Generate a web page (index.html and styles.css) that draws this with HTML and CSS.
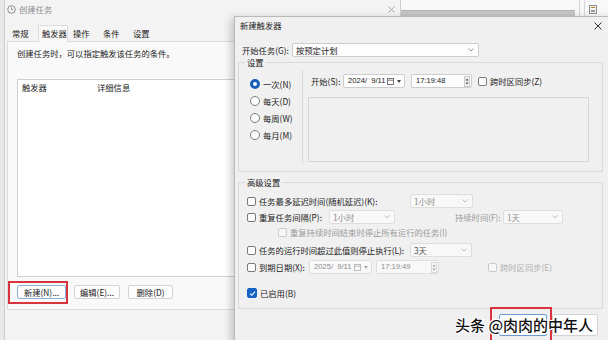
FILE: index.html
```html
<!DOCTYPE html>
<html lang="zh-CN">
<head>
    <meta charset="utf-8">
    <title>新建触发器</title>
    <link rel="stylesheet" href="styles.css">
</head>
<body>
<div class="desktop">

    <!-- window far behind, top right -->
    <div class="win-back">
        <div class="back-pane"><div class="back-bar"></div></div>
        <div class="back-tool">
            <svg width="8" height="9" viewBox="0 0 8 9"><rect x="0.5" y="0.5" width="7" height="8" fill="#f4f4f4" stroke="#8c8c8c"/><rect x="2" y="5" width="4" height="2" fill="#9a9a9a"/><rect x="2" y="2" width="4" height="1" fill="#c07a2a"/></svg>
        </div>
    </div>

    <!-- 创建任务 -->
    <div class="win-main">
        <div class="titlebar">
            <svg class="clock" width="9" height="9" viewBox="0 0 9 9"><circle cx="4.5" cy="4.5" r="3.8" fill="none" stroke="#8a8a8a" stroke-width="1"/><path d="M4.5 2.3V4.6H6.2" fill="none" stroke="#8a8a8a" stroke-width="0.9"/></svg>
            <span class="title-text">创建任务</span>
            <svg class="close" width="7" height="7" viewBox="0 0 7 7"><path d="M0.5 0.5L6.5 6.5M6.5 0.5L0.5 6.5" stroke="#9a9a9a" stroke-width="0.9"/></svg>
        </div>
        <div class="tabs">
            <div class="tab first">常规</div>
            <div class="tab on">触发器</div>
            <div class="tab">操作</div>
            <div class="tab">条件</div>
            <div class="tab">设置</div>
        </div>
        <div class="panel">
            <p class="desc">创建任务时，可以指定触发该任务的条件。</p>
            <div class="list">
                <div class="list-head"><span class="col-trigger">触发器</span><span>详细信息</span></div>
            </div>
            <div class="btn-row">
                <button class="btn focus w49">新建(N)...</button>
                <button class="btn w46">编辑(E)...</button>
                <button class="btn w45">删除(D)</button>
            </div>
        </div>
    </div>
    <div class="mark mark-new"></div>

    <!-- 新建触发器 -->
    <div class="dialog">
        <div class="dlg-title">
            <span>新建触发器</span>
            <svg class="dlg-close" width="8" height="8" viewBox="0 0 8 8"><path d="M0.5 0.5L7.5 7.5M7.5 0.5L0.5 7.5" stroke="#333" stroke-width="1"/></svg>
        </div>

        <div class="start-row">
            <span class="l50">开始任务(G):</span>
            <div class="field w187">按预定计划
                <svg class="chev" width="6" height="4" viewBox="0 0 6 4"><path d="M0.5 0.5L3 3L5.5 0.5" fill="none" stroke="#888" stroke-width="0.9"/></svg>
            </div>
        </div>

        <fieldset class="group g-set">
            <legend>设置</legend>
            <div class="set-body">
                <div class="radios">
                    <div class="radio-row"><span class="radio on"></span>一次(N)</div>
                    <div class="radio-row"><span class="radio"></span>每天(D)</div>
                    <div class="radio-row"><span class="radio"></span>每周(W)</div>
                    <div class="radio-row"><span class="radio"></span>每月(M)</div>
                </div>
                <div class="sched">
                    <div class="sched-row">
                        <span class="l32">开始(S):</span>
                        <div class="field num w62 mr6">2024/&nbsp; 9/11
                            <svg class="cal" width="7" height="8" viewBox="0 0 7 8"><rect x="0.5" y="1.5" width="6" height="6" fill="#fff" stroke="#777"/><path d="M0.5 3.2H6.5" stroke="#777"/></svg>
                            <svg class="tri" width="4" height="3" viewBox="0 0 4 3"><path d="M0 0H4L2 3Z" fill="#444"/></svg>
                        </div>
                        <div class="field num w61 mr6">17:19:48
                            <svg class="spin" width="6" height="11" viewBox="0 0 6 11"><rect x="0.5" y="0.5" width="5" height="10" fill="#f2f2f2" stroke="#c9c9c9"/><path d="M1.5 4.5H4.5L3 2.5Z M1.5 6.5H4.5L3 8.5Z" fill="#444"/></svg>
                        </div>
                        <span class="cb"></span>跨时区同步(Z)
                    </div>
                    <div class="detail-box"></div>
                </div>
            </div>
        </fieldset>

        <fieldset class="group g-adv">
            <legend>高级设置</legend>
            <div class="adv-body">
                <div class="adv-row">
                    <span class="cb"></span>
                    <span class="l151">任务最多延迟时间(随机延迟)(K):</span>
                    <div class="field dis w63">1小时
                        <svg class="chev" width="6" height="4" viewBox="0 0 6 4"><path d="M0.5 0.5L3 3L5.5 0.5" fill="none" stroke="#b5b5b5" stroke-width="0.9"/></svg>
                    </div>
                </div>
                <div class="adv-row">
                    <span class="cb"></span>
                    <span class="l70">重复任务间隔(P):</span>
                    <div class="field dis w66">1小时
                        <svg class="chev" width="6" height="4" viewBox="0 0 6 4"><path d="M0.5 0.5L3 3L5.5 0.5" fill="none" stroke="#b5b5b5" stroke-width="0.9"/></svg>
                    </div>
                    <span class="l48 grey ml60">持续时间(F):</span>
                    <div class="field dis w60">1天
                        <svg class="chev" width="6" height="4" viewBox="0 0 6 4"><path d="M0.5 0.5L3 3L5.5 0.5" fill="none" stroke="#b5b5b5" stroke-width="0.9"/></svg>
                    </div>
                </div>
                <div class="adv-row sub">
                    <span class="cb off"></span>
                    <span class="grey">重复持续时间结束时停止所有运行的任务(I)</span>
                </div>
                <div class="adv-row r4">
                    <span class="cb"></span>
                    <span class="l151">任务的运行时间超过此值则停止执行(L):</span>
                    <div class="field dis w62 dark">3天
                        <svg class="chev" width="6" height="4" viewBox="0 0 6 4"><path d="M0.5 0.5L3 3L5.5 0.5" fill="none" stroke="#b5b5b5" stroke-width="0.9"/></svg>
                    </div>
                </div>
                <div class="adv-row r5">
                    <span class="cb"></span>
                    <span class="l50">到期日期(X):</span>
                    <div class="field num dis w63 mr4">2025/&nbsp; 9/11
                        <svg class="cal" width="7" height="8" viewBox="0 0 7 8"><rect x="0.5" y="1.5" width="6" height="6" fill="#fafafa" stroke="#bbb"/><path d="M0.5 3.2H6.5" stroke="#bbb"/></svg>
                        <svg class="tri" width="4" height="3" viewBox="0 0 4 3"><path d="M0 0H4L2 3Z" fill="#aaa"/></svg>
                    </div>
                    <div class="field num dis w63">17:19:49
                        <svg class="spin" width="6" height="11" viewBox="0 0 6 11"><rect x="0.5" y="0.5" width="5" height="10" fill="#f6f6f6" stroke="#d8d8d8"/><path d="M1.5 4.5H4.5L3 2.5Z M1.5 6.5H4.5L3 8.5Z" fill="#999"/></svg>
                    </div>
                    <span class="cb off ml49"></span>
                    <span class="grey light">跨时区同步(E)</span>
                </div>
                <div class="adv-row r6">
                    <span class="cb on">
                        <svg width="7" height="7" viewBox="0 0 7 7"><path d="M1 3.6L2.8 5.3L6 1.6" fill="none" stroke="#fff" stroke-width="1.1"/></svg>
                    </span>
                    <span>已启用(B)</span>
                </div>
            </div>
        </fieldset>

        <!-- OK / Cancel, labels hidden under the watermark -->
        <div class="dlg-buttons">
            <button class="btn big default w48"></button>
            <button class="btn big w46"></button>
        </div>
    </div>
    <div class="mark mark-ok"></div>

    <div class="watermark">头条 @肉肉的中年人</div>
</div>
</body>
</html>
```

FILE: styles.css
```css
* {
    box-sizing: border-box;
}
html, body {
    margin: 0;
    padding: 0;
}
body {
    width: 608px;
    height: 340px;
    overflow: hidden;
    background: #e8e8e8;
    font-family: "Noto Sans CJK SC", "Noto Sans", sans-serif;
    font-size: 8.3px;
    line-height: 12px;
    color: #1b1b1b;
}
.desktop {
    position: relative;
    width: 608px;
    height: 340px;
}

/* back window */
.win-back {
    position: absolute;
    left: 400px;
    top: 0;
    width: 208px;
    height: 30px;
    background: #f8f8f8;
    display: flex;
}
.back-pane {
    width: 180px;
    padding-top: 10px;
    border-right: 1px solid #d3d3d3;
}
.back-bar {
    width: 175px;
    height: 6px;
    background: #c6c6c6;
    border-top: 1px solid #b3b3b3;
}
.back-tool {
    margin-left: 4px;
    padding: 4px 0 0 4px;
    border-left: 1px solid #d8d8d8;
}

/* main window */
.win-main {
    position: absolute;
    left: 4px;
    top: 0;
    width: 397px;
    height: 340px;
    background: #f3f3f3;
    border-left: 1px solid #cdcdcd;
    border-right: 1px solid #cdcdcd;
}
.titlebar {
    height: 18px;
    display: flex;
    align-items: center;
    padding-left: 2px;
    color: #8c8c8c;
}
.clock {
    margin-right: 3px;
}
.titlebar .close {
    margin-left: auto;
    margin-right: 5px;
}
.tabs {
    display: flex;
    margin-top: 7px;
    padding-left: 2px;
    height: 16px;
}
.tab {
    width: 30px;
    padding-left: 5px;
    line-height: 16px;
}
.tab.first {
    width: 31px;
}
.tab.on {
    position: relative;
    z-index: 1;
    height: 17px;
    padding-left: 3px;
    line-height: 15px;
    background: #f9f9f9;
    border: 1px solid #dcdcdc;
    border-bottom: none;
    margin-bottom: -1px;
}
.panel {
    margin-left: 2px;
    width: 392px;
    height: 269px;
    background: #f9f9f9;
    border: 1px solid #dcdcdc;
    padding: 5px 0 0 9px;
}
.desc {
    margin: 0;
}
.list {
    margin-top: 20px;
    width: 381px;
    height: 198px;
    background: #fff;
    border: 1px solid #cfcfcf;
}
.list-head {
    display: flex;
    padding: 1px 4px;
}
.col-trigger {
    width: 75px;
}
.btn-row {
    display: flex;
    gap: 8px;
    margin-top: 8px;
}
.btn {
    height: 14px;
    padding: 0;
    font: inherit;
    line-height: 12px;
    color: #1b1b1b;
    background: #fdfdfd;
    border: 1px solid #d3d3d3;
    border-radius: 2px;
}
.btn.focus {
    border-color: #8db1de;
}
.w45 { width: 45px; }
.w46 { width: 46px; }
.w48 { width: 48px; }
.w49 { width: 49px; }

/* red annotation boxes */
.mark {
    position: absolute;
    border: 2px solid #d8333f;
    z-index: 5;
}
.mark-new {
    left: 8px;
    top: 281px;
    width: 60px;
    height: 23px;
}
.mark-ok {
    left: 490px;
    top: 307px;
    width: 62px;
    height: 40px;
}

/* dialog */
.dialog {
    position: absolute;
    left: 234px;
    top: 16px;
    width: 380px;
    height: 330px;
    background: #f0f0f0;
    border: 1px solid #b9b9b9;
    box-shadow: -3px 2px 8px rgba(0, 0, 0, 0.2);
}
.dlg-title {
    height: 25px;
    display: flex;
    align-items: flex-start;
    padding: 2px 0 0 5px;
}
.dlg-close {
    margin: 3px 11px 0 auto;
}
.start-row {
    display: flex;
    align-items: center;
    height: 15px;
    padding-left: 7px;
}
.l32 { width: 32px; flex: none; }
.l48 { width: 48px; flex: none; }
.l50 { width: 50px; flex: none; }
.l70 { width: 70px; flex: none; }
.l151 { width: 151px; flex: none; }
.w60 { width: 60px; }
.w61 { width: 61px; }
.w62 { width: 62px; }
.w63 { width: 63px; }
.w66 { width: 66px; }
.w187 { width: 187px; height: 15px; }
.mr4 { margin-right: 4px; }
.mr6 { margin-right: 6px; }
.ml49 { margin-left: 49px; }
.ml60 { margin-left: 60px; }

.field {
    flex: none;
    height: 14px;
    display: flex;
    align-items: center;
    padding-left: 3px;
    background: #fdfdfd;
    border: 1px solid #cdcdcd;
    border-radius: 2px;
    white-space: nowrap;
}
.field.num {
    font-family: "Liberation Sans", "Noto Sans CJK SC", sans-serif;
    font-size: 7.6px;
    padding-left: 4px;
}
.field .chev {
    margin-left: auto;
    margin-right: 4px;
}
.field .cal {
    margin-left: auto;
    margin-right: 3px;
}
.field .tri {
    margin-right: 3px;
}
.field .spin {
    margin-left: auto;
    margin-right: 1px;
}
.field.dis {
    background: #f8f8f8;
    border-color: #dedede;
    color: #8e8e8e;
}
.field.dis.dark {
    color: #555;
}

.group {
    margin: 0 0 0 3px;
    width: 365px;
    padding: 0;
    min-width: 0;
    border: 1px solid #d9d9d9;
}
.group legend {
    margin-left: 6px;
    padding: 0 2px;
    line-height: 10px;
}
.g-set {
    padding-bottom: 8px;
}
.set-body {
    display: flex;
}
.radios {
    width: 64px;
    height: 93px;
    margin-top: 3px;
    padding: 5px 0 0 11px;
    border-right: 1px solid #d9d9d9;
}
.radio-row {
    display: flex;
    align-items: center;
    height: 17px;
}
.radio {
    width: 10px;
    height: 10px;
    margin-right: 3px;
    border: 1px solid #7c7c7c;
    border-radius: 50%;
    background: #fdfdfd;
}
.radio.on {
    border: 3px solid #155fbb;
    background: #fff;
}
.sched-row {
    display: flex;
    align-items: center;
    height: 14px;
    margin-top: 7px;
    padding-left: 8px;
    white-space: nowrap;
}
.detail-box {
    width: 281px;
    height: 65px;
    margin: 9px 0 0 5px;
    border: 1px solid #d6d6d6;
}

.cb {
    flex: none;
    width: 9px;
    height: 9px;
    margin-right: 3px;
    border: 1px solid #7a7a7a;
    border-radius: 2px;
    background: #fdfdfd;
}
.cb.off {
    border-color: #cbcbcb;
    background: #f7f7f7;
}
.cb.on {
    width: 10px;
    height: 10px;
    display: flex;
    align-items: center;
    justify-content: center;
    background: #1663c3;
    border-color: #1663c3;
}

.g-adv {
    margin-top: 5px;
    padding-bottom: 7px;
}
.adv-body {
    padding-top: 6px;
}
.adv-row {
    display: flex;
    align-items: center;
    height: 16px;
    padding-left: 8px;
    white-space: nowrap;
}
.adv-row.sub {
    height: 14px;
    padding-left: 39px;
}
.adv-row.r4 {
    margin-top: 3px;
}
.adv-row.r5 {
    margin-top: 1px;
}
.adv-row.r6 {
    margin-top: 10px;
}
.grey {
    color: #9a9a9a;
}
.grey.light {
    color: #b0b0b0;
}

.dlg-buttons {
    display: flex;
    justify-content: flex-end;
    gap: 5px;
    margin: 5px 15px 0 0;
}
.btn.big {
    height: 22px;
}
.btn.default {
    border-color: #6b9bd6;
}

.watermark {
    position: absolute;
    left: 455px;
    top: 315px;
    z-index: 6;
    font-size: 15px;
    line-height: 20px;
    font-weight: 500;
    color: #111;
    white-space: nowrap;
    text-shadow: 1px 0 #fff, -1px 0 #fff, 0 1px #fff, 0 -1px #fff,
                 1px 1px #fff, -1px -1px #fff, 1px -1px #fff, -1px 1px #fff;
}
```
